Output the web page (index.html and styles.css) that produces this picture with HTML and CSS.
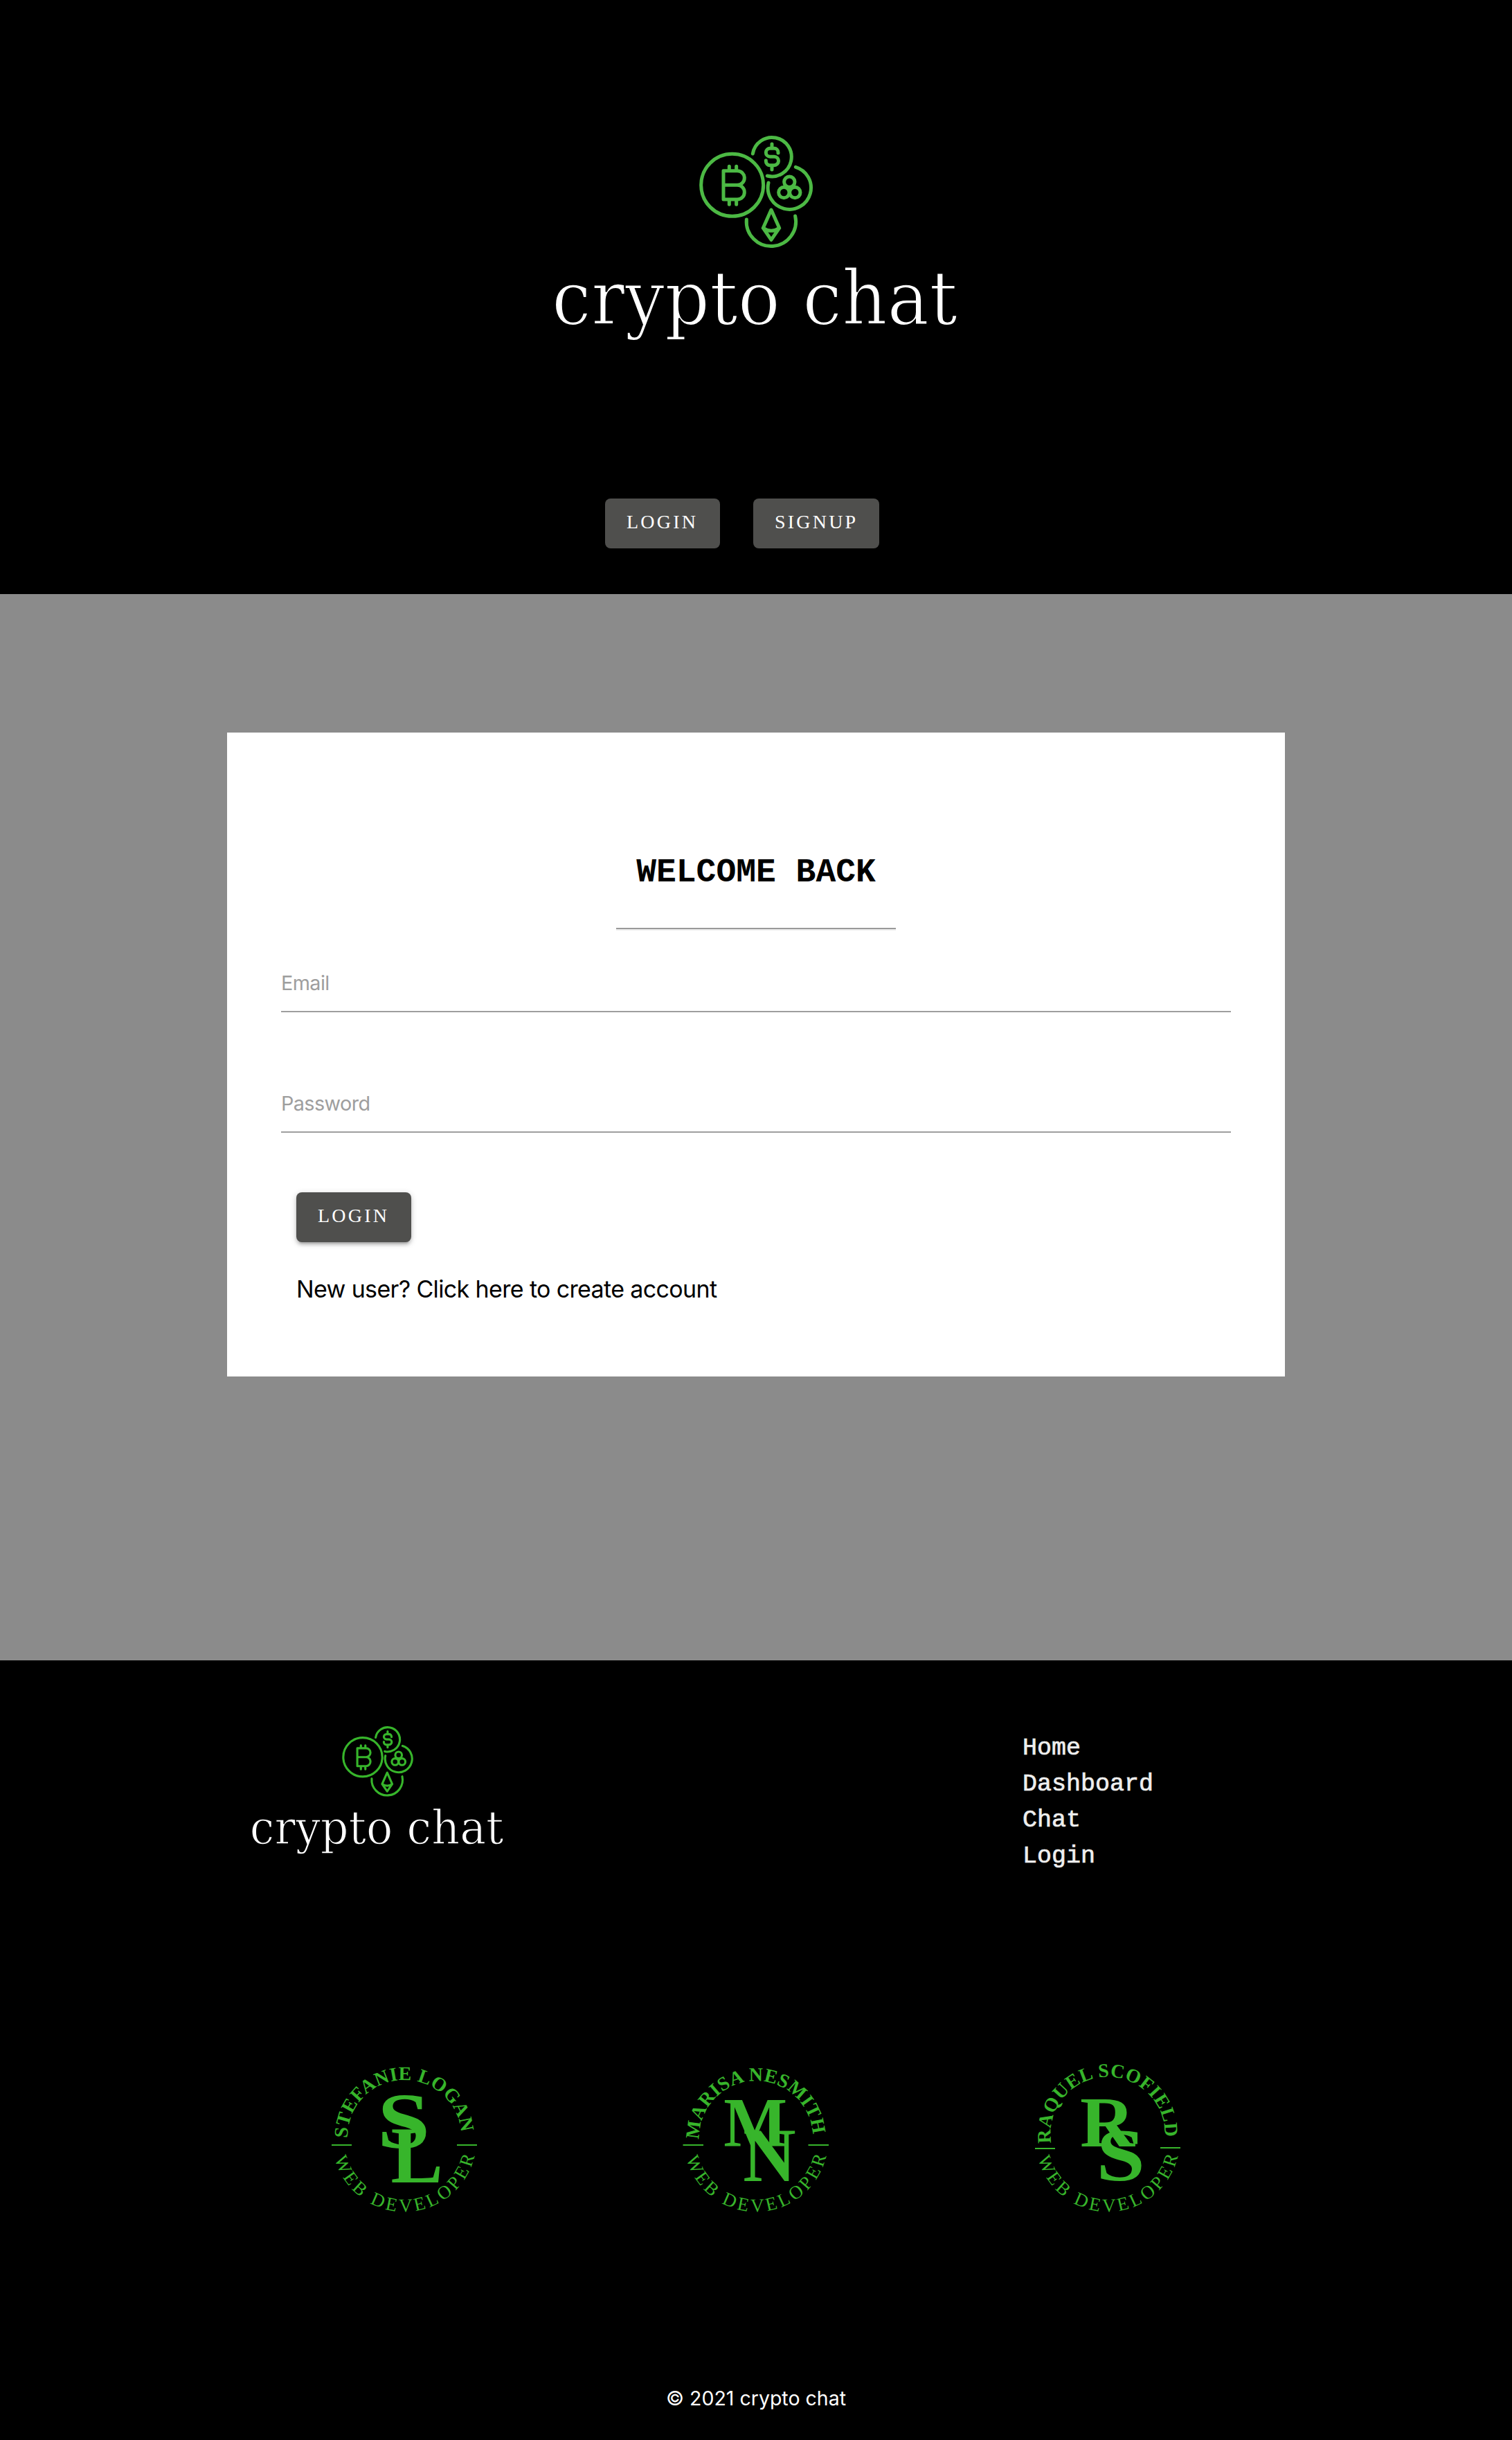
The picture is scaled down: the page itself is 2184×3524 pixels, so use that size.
FILE: index.html
```html
<!DOCTYPE html>
<html lang="en">
<head>
<meta charset="utf-8">
<title>crypto chat</title>
<link rel="stylesheet" href="styles.css">
</head>
<body>
<header class="header">
  <svg class="header-logo" viewBox="0 0 580 300">
    <g id="logo">
      <g class="coins" transform="translate(178 -17) scale(.3333)">
        <circle cx="233" cy="265" r="135"/>
        <path d="M322 129A84.500 84.500 0 1 1 385 225"/>
        <path d="M508 187A93.500 93.500 0 1 1 390 255"/>
        <path d="M295 414A107 107 0 1 0 506 399"/>
        <path d="M195 203H255A31 31 0 0 1 255 265H195M255 265A31 31 0 0 1 255 327H195V203M220 184V203M251 184V203M220 327V349M251 327V349"/>
        <path d="M432 126V123A17 17 0 0 0 415 106H397A18 18 0 0 0 397 142H415A18 18 0 0 1 415 179H397A17 17 0 0 1 379 162V158M405 87V106M405 179V198"/>
        <circle cx="481" cy="251" r="23"/><circle cx="457" cy="297" r="23"/><circle cx="505" cy="297" r="23"/>
        <path d="M402 372L367 451L402 502L437 451ZM367 451Q402 475 437 451"/>
      </g>
      <text class="wordmark" x="-5" y="272" textLength="586" lengthAdjust="spacingAndGlyphs">crypto chat</text>
    </g>
  </svg>
  <nav class="header-nav">
    <a class="btn">LOGIN</a>
    <a class="btn btn-wide">SIGNUP</a>
  </nav>
</header>

<main class="main">
  <section class="card">
    <h1 class="title">WELCOME BACK</h1>
    <hr class="rule">
    <form class="form">
      <div class="field">Email</div>
      <div class="field">Password</div>
      <div class="actions">
        <a class="btn btn-raised">LOGIN</a>
        <a class="signup">New user? Click here to create account</a>
      </div>
    </form>
  </section>
</main>

<footer class="footer">
  <div class="footer-top">
    <svg class="footer-logo" viewBox="0 0 580 300"><use href="#logo"/></svg>
    <ul class="links">
      <li>Home</li><li>Dashboard</li><li>Chat</li><li>Login</li>
    </ul>
  </div>
  <div class="team">
    <svg class="badge" viewBox="475 2972 220 236">
      <path id="t1" class="guide" d="M503 3088A82 82 0 0 1 667 3084"/>
      <path id="b1" class="guide" d="M484.500 3117A104 104 0 0 0 687 3111"/>
      <text class="name"><textPath href="#t1" textLength="253">STEFANIE LOGAN</textPath></text>
      <text class="role"><textPath href="#b1" textLength="276">WEB DEVELOPER</textPath></text>
      <path class="bar" d="M480 3098H509M661 3098H690"/>
      <text class="mono" transform="matrix(1.370 0 0 1.153 546 3102)">S</text>
      <text class="mono" transform="matrix(1.130 0 0 1.170 565.500 3152)">L</text>
    </svg>
    <svg class="badge" viewBox="983 2972 220 236">
      <path id="t2" class="guide" d="M1011 3090A82 82 0 0 1 1175 3085"/>
      <path id="b2" class="guide" d="M992.500 3117A104 104 0 0 0 1195 3111"/>
      <text class="name"><textPath href="#t2" textLength="255">MARISA NESMITH</textPath></text>
      <text class="role"><textPath href="#b2" textLength="276">WEB DEVELOPER</textPath></text>
      <path class="bar" d="M987.500 3098H1017M1168.500 3098H1198"/>
      <text class="mono" transform="matrix(.973 0 0 1.025 1046.300 3100)">M</text>
      <text class="mono" transform="matrix(1.057 0 0 1.090 1074.300 3150)">N</text>
    </svg>
    <svg class="badge" viewBox="1491 2972 220 236">
      <path id="t3" class="guide" d="M1519.500 3095A82.500 82.500 0 1 1 1683 3091"/>
      <path id="b3" class="guide" d="M1500.500 3117A104 104 0 0 0 1703 3111"/>
      <text class="name"><textPath href="#t3" textLength="276">RAQUEL SCOFIELD</textPath></text>
      <text class="role"><textPath href="#b3" textLength="276">WEB DEVELOPER</textPath></text>
      <path class="bar" d="M1496 3103H1525M1677 3102H1706"/>
      <text class="mono" transform="matrix(1.093 0 0 1.035 1561 3100)">R</text>
      <text class="mono" transform="matrix(1.267 0 0 1.083 1584.600 3149)">S</text>
    </svg>
  </div>
  <p class="copyright">© 2021 crypto chat</p>
</footer>
</body>
</html>
```
FILE: styles.css
```css
* { box-sizing: border-box; }
body { margin: 0; background: #000; font-family: Inter, "Liberation Sans", sans-serif; }

.header {
  height: 858px;
  padding-top: 196px;
  background: #000;
  display: flex;
  flex-direction: column;
  align-items: center;
  color: #4cb944;
}
.header-logo { width: 580px; height: 300px; overflow: visible; }
.coins { fill: none; stroke: currentColor; stroke-width: 15; stroke-linecap: round; stroke-linejoin: round; }
.wordmark {
  font-family: "DejaVu Serif", serif;
  font-size: 109px;
  fill: #fff;
  stroke: #000;
  stroke-width: 2.2px;
}
.header-nav {
  width: 436px;
  margin-top: 224px;
  display: flex;
  gap: 48px;
}
.btn {
  width: 166px;
  height: 72px;
  padding-left: 31px;
  border-radius: 8px;
  background: #4f4f4d;
  color: #fff;
  font: 28px/67px "Liberation Serif", serif;
  letter-spacing: 3.200px;
  white-space: nowrap;
}
.btn-wide { width: 182px; }

.main { height: 1540px; padding-top: 200px; background: #8b8b8b; }
.card {
  width: 1528px;
  height: 930px;
  margin: 0 auto;
  padding: 172px 78px 0;
  background: #fff;
}
.title {
  margin: 0;
  text-align: center;
  font: bold 48px/60px "Liberation Mono", monospace;
  color: #000;
}
.rule {
  width: 404px;
  height: 4px;
  margin: 50px auto 0;
  border: 0;
  border-top: 2px solid #9a9a9a;
  border-bottom: 2px solid #eee;
}
.field {
  height: 86px;
  margin-top: 32px;
  border-bottom: 2px solid #9e9e9e;
  font-size: 28.800px;
  letter-spacing: -.600px;
  line-height: 88px;
  color: #9e9e9e;
}
.field + .field { margin-top: 88px; }
.actions {
  margin: 86px 0 0 22px;
  display: flex;
  flex-direction: column;
  align-items: flex-start;
}
.btn-raised { box-shadow: 0 4px 4px rgba(0,0,0,.14), 0 6px 2px -4px rgba(0,0,0,.12), 0 2px 10px rgba(0,0,0,.2); }
.signup { margin-top: 44px; font-size: 34px; letter-spacing: -.640px; line-height: 48px; color: #000; }

.footer { height: 1126px; color: #37b52b; }
.footer-top {
  height: 574px;
  padding: 95px 0 0 364px;
  display: flex;
  align-items: flex-start;
}
.footer-logo { width: 363px; height: 188px; overflow: visible; }
.links {
  margin: 6px 0 0 750px;
  padding: 0;
  list-style: none;
  font: 35px/52px "Liberation Mono", monospace;
  -webkit-text-stroke: .700px #eee;
  color: #eee;
}
.team { display: flex; justify-content: center; gap: 288px; }
.badge { width: 220px; height: 236px; fill: currentColor; font-family: "Liberation Serif", serif; }
.guide { fill: none; }
.bar { stroke: currentColor; stroke-width: 2; }
.name { font-size: 28px; font-weight: bold; }
.role { font-size: 27px; }
.mono { font-size: 100px; font-weight: bold; }
.copyright {
  margin: 234px 0 0;
  text-align: center;
  font-size: 28.500px;
  line-height: 44px;
  color: #fff;
}
```
